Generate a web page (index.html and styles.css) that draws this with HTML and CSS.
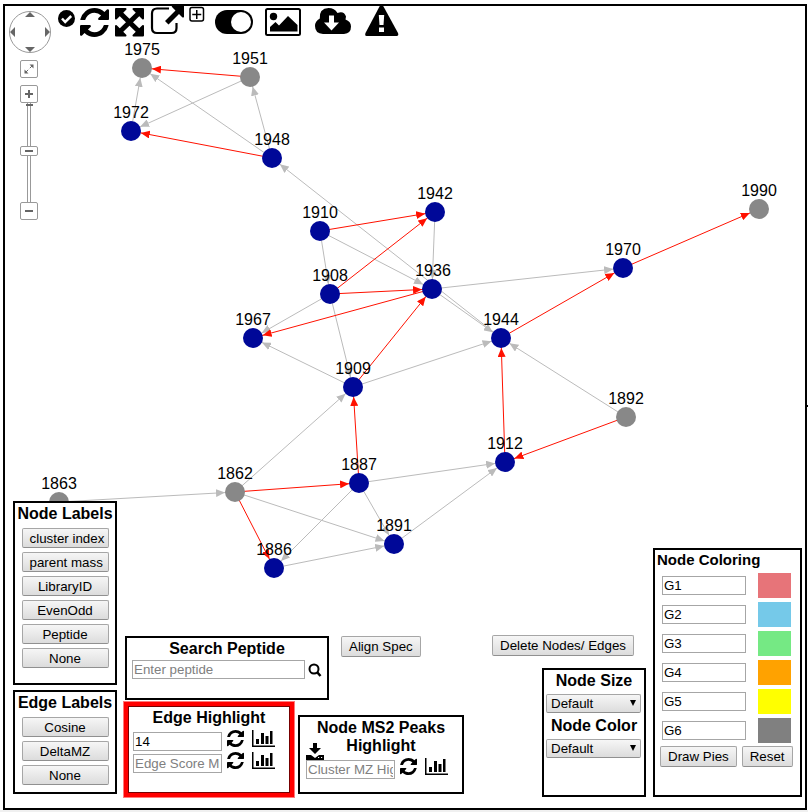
FILE: index.html
```html
<!DOCTYPE html>
<html lang="en">
<head>
<meta charset="utf-8">
<title>Network Viewer</title>
<link rel="stylesheet" href="styles.css">
</head>
<body>
<svg class="defs" aria-hidden="true">
  <symbol id="refresh" viewBox="0 0 1536 1536"><path d="M1511 928q0 5-1 7-64 268-268 434.500t-478 166.500q-146 0-282.500-55t-243.500-157l-129 129q-19 19-45 19t-45-19-19-45v-448q0-26 19-45t45-19h448q26 0 45 19t19 45-19 45l-137 137q71 66 161 102t187 36q134 0 250-65t186-179q11-17 53-117 8-23 30-23h192q13 0 22.500 9.500t9.500 22.500zM1536 128v448q0 26-19 45t-45 19h-448q-26 0-45-19t-19-45 19-45l138-138q-148-137-349-137-134 0-250 65t-186 179q-11 17-53 117-8 23-30 23h-199q-13 0-22.500-9.500t-9.500-22.500v-7q65-268 270-434.500t480-166.500q146 0 284 55.500t245 156.500l130-129q19-19 45-19t45 19 19 45z"/></symbol>
  <symbol id="chart" viewBox="0 0 23 17"><path d="M0 0h1.500v15.500H23V17H0zM4 9h3v5H4zM9 3h3v11H9zM13.500 6h3v8h-3zM18 1h2.500v13H18z"/></symbol>
</svg>
<div class="page">
  <svg class="graph" role="img" aria-label="Spectral network">
    <defs>
      <marker id="tip-grey" markerUnits="userSpaceOnUse" markerWidth="9" markerHeight="8" refX="19" refY="4" orient="auto"><path d="M0 0L9 4L0 8z" fill="#bbb"/></marker>
      <marker id="tip-red" markerUnits="userSpaceOnUse" markerWidth="9" markerHeight="8" refX="19" refY="4" orient="auto"><path d="M0 0L9 4L0 8z" fill="#f10"/></marker>
    </defs>
    <g class="edges">
      <path d="M131 131L142 68"/><path d="M272 158L142 68"/><path d="M250 77L131 131"/><path d="M272 158L250 77"/>
      <path d="M501 338L272 158"/><path d="M320 231L432 289"/><path d="M320 231L330 294"/><path d="M435 212L432 289"/>
      <path d="M330 294L253 338"/><path d="M330 294L353 387"/><path d="M353 387L253 338"/><path d="M353 387L501 338"/>
      <path d="M432 289L623 268"/><path d="M432 289L501 338"/><path d="M626 417L501 338"/><path d="M235 492L353 387"/>
      <path d="M359 483L505 462"/><path d="M235 492L394 544"/><path d="M359 483L394 544"/><path d="M359 483L274 568"/>
      <path d="M274 568L394 544"/><path d="M394 544L505 462"/><path d="M59 502L235 492"/>
    </g>
    <g class="edges matched">
      <path d="M250 77L142 68"/><path d="M272 158L131 131"/><path d="M320 231L435 212"/><path d="M330 294L435 212"/>
      <path d="M330 294L432 289"/><path d="M432 289L253 338"/><path d="M353 387L432 289"/><path d="M501 338L623 268"/>
      <path d="M623 268L759 209"/><path d="M505 462L501 338"/><path d="M626 417L505 462"/><path d="M235 492L359 483"/>
      <path d="M359 483L353 387"/><path d="M235 492L274 568"/>
    </g>
    <g class="nodes">
      <circle cx="131" cy="131" r="10"/><circle cx="272" cy="158" r="10"/><circle cx="435" cy="212" r="10"/>
      <circle cx="320" cy="231" r="10"/><circle cx="330" cy="294" r="10"/><circle cx="432" cy="289" r="10"/>
      <circle cx="253" cy="338" r="10"/><circle cx="501" cy="338" r="10"/><circle cx="353" cy="387" r="10"/>
      <circle cx="623" cy="268" r="10"/><circle cx="505" cy="462" r="10"/><circle cx="359" cy="483" r="10"/>
      <circle cx="394" cy="544" r="10"/><circle cx="274" cy="568" r="10"/>
    </g>
    <g class="nodes unmatched">
      <circle cx="142" cy="68" r="10"/><circle cx="250" cy="77" r="10"/><circle cx="759" cy="209" r="10"/>
      <circle cx="626" cy="417" r="10"/><circle cx="235" cy="492" r="10"/><circle cx="59" cy="502" r="10"/>
    </g>
    <g class="node-names">
      <text x="142" y="55">1975</text><text x="250" y="64">1951</text><text x="131" y="118">1972</text><text x="272" y="145">1948</text>
      <text x="435" y="199">1942</text><text x="320" y="218">1910</text><text x="330" y="281">1908</text><text x="433" y="276">1936</text>
      <text x="253" y="325">1967</text><text x="501" y="325">1944</text><text x="353" y="374">1909</text><text x="623" y="255">1970</text>
      <text x="759" y="196">1990</text><text x="626" y="404">1892</text><text x="505" y="449">1912</text><text x="359" y="470">1887</text>
      <text x="235" y="479">1862</text><text x="59" y="489">1863</text><text x="394" y="531">1891</text><text x="274" y="555">1886</text>
    </g>
  </svg>

  <main class="workspace">
    <header class="top">
      <div class="navigator">
        <button class="pan" type="button" aria-label="Pan"><svg width="42" height="42" viewBox="0 0 42 42"><circle cx="21" cy="21" r="20.500" fill="#fff" stroke="#999"/><path d="M21 1l5 5H16zM21 41l5-5H16zM1 21l5-5v10zM41 21l-5-5v10z" fill="#666"/></svg></button>
        <button class="nav-btn fit" type="button" aria-label="Fit"><svg width="16" height="16" viewBox="0 0 16 16"><path d="M4 12L12 4" stroke="#666" stroke-dasharray="4.500 2.300"/><path d="M8.500 3.500h4v4zM3.500 8.500v4h4z" fill="#666"/></svg></button>
        <button class="nav-btn" type="button" aria-label="Zoom in"><svg width="16" height="16" viewBox="0 0 16 16"><path d="M8 4v8M4 8h8" stroke="#666" stroke-width="2"/></svg></button>
        <input class="zoom" type="range" min="0" max="100" value="52" aria-label="Zoom">
        <button class="nav-btn" type="button" aria-label="Zoom out"><svg width="16" height="16" viewBox="0 0 16 16"><path d="M4 8h8" stroke="#666" stroke-width="2"/></svg></button>
      </div>
      <div class="tools">
        <button type="button" aria-label="Select"><svg width="17" height="32" viewBox="0 0 17 32"><circle cx="8.500" cy="12.500" r="8.500"/><path d="M4 12.500l3.200 3.500 6-6" fill="none" stroke="#fff" stroke-width="2.500"/></svg></button>
        <button type="button" aria-label="Refresh"><svg width="30" height="32"><use href="#refresh" x="0" y="2" width="29" height="29"/></svg></button>
        <button type="button" aria-label="Expand"><svg width="30" height="32" viewBox="0 -2 30 32"><path d="M5 5l19 18.500M24 5L5 23.500" stroke="#000" stroke-width="5"/><path d="M1 1h9.500L1 10.500zM28 1v9.500L18.500 1zM1 27.500V18l9.500 9.500zM28 27.500h-9.500L28 18z" stroke="#000" stroke-width="2" stroke-linejoin="round"/></svg></button>
        <button type="button" aria-label="Open in new window"><svg width="34" height="32" viewBox="0 0 34 32"><path d="M19 2.500H7Q2 2.500 2 7.500V22q0 5 5 5h14.500q5 0 5-5V17" fill="none" stroke="#000" stroke-width="2.200"/><path d="M22 0h12v11q-1 1-2 0l-3-3-10.500 10.500-3.500-3.500L25.500 4.500 22 1q-.6-.6 0-1z"/></svg></button>
        <button type="button" aria-label="Add"><svg width="16" height="32" viewBox="0 0 16 32"><path d="M3 1.500h9.500q2 0 2 2V13q0 2-2 2H3q-2 0-2-2V3.500q0-2 2-2zM7.750 4v9M3.250 8.500h9" fill="none" stroke="#000" stroke-width="1.500"/></svg></button>
        <div class="tools-view">
          <button type="button" aria-label="Toggle"><svg width="37" height="32" viewBox="0 0 37 32"><rect x="0" y="4" width="38" height="24" rx="12"/><circle cx="26" cy="16" r="10" fill="#fff"/></svg></button>
          <button type="button" aria-label="Save image"><svg width="37" height="32" viewBox="0 0 37 32"><rect x="1" y="3" width="34" height="26" rx="1.500" fill="none" stroke="#000" stroke-width="2"/><circle cx="8.500" cy="10.500" r="3.700"/><path d="M5 25.500v-4.500l5.500-5 3.500 3.500 9-9.500 9.500 9v6.500z"/></svg></button>
          <button type="button" aria-label="Download"><svg width="37" height="32" viewBox="0 0 37 32"><path d="M8 28Q0 27.500 0 20q0-5 4.800-7.500Q4 2.500 13.500 2q6 0 9 5 6.500-2.500 8.500 3.500l-.5 3q5.500 2 5.500 7 0 7-7 7.500z"/><path d="M14 9.500h5v7h5l-7.500 8-7.500-8h5z" fill="#fff"/></svg></button>
          <button type="button" aria-label="Report a problem"><svg width="34" height="32" viewBox="0 0 34 32"><path d="M14.500.5q2-2 4 0L33 27q1 3-1.500 3h-30Q-.5 30 .5 27z"/><path d="M13.800 9h5.400l-.7 10h-4zM14 21.500h5V26h-5z" fill="#fff"/></svg></button>
        </div>
      </div>
    </header>

    <div class="panels">
      <div class="labels-column">
        <section class="panel node-labels">
          <h2>Node Labels</h2>
          <button class="btn" type="button">cluster index</button>
          <button class="btn" type="button">parent mass</button>
          <button class="btn" type="button">LibraryID</button>
          <button class="btn" type="button">EvenOdd</button>
          <button class="btn" type="button">Peptide</button>
          <button class="btn" type="button">None</button>
        </section>
        <section class="panel edge-labels">
          <h2>Edge Labels</h2>
          <button class="btn" type="button">Cosine</button>
          <button class="btn" type="button">DeltaMZ</button>
          <button class="btn" type="button">None</button>
        </section>
      </div>

      <div class="search-column">
        <div class="search-row">
          <section class="panel search">
            <h2><label for="peptide">Search Peptide</label></h2>
            <div class="field">
              <input id="peptide" type="text" placeholder="Enter peptide">
              <button class="icon" type="button" aria-label="Search"><svg width="14" height="14" viewBox="0 0 14 14"><circle cx="6" cy="6" r="4.500" fill="none" stroke="#000" stroke-width="2"/><path d="M9 9l3.500 4" stroke="#000" stroke-width="2.500"/></svg></button>
            </div>
          </section>
          <button class="btn wide" type="button">Align Spec</button>
        </div>
        <div class="highlight-row">
          <section class="panel edge-highlight">
            <h2>Edge Highlight</h2>
            <div class="field">
              <input type="text" value="14" aria-label="Edge mass">
              <button class="icon" type="button" aria-label="Apply"><svg width="17" height="17"><use href="#refresh"/></svg></button>
              <button class="icon chart" type="button" aria-label="Histogram"><svg width="23" height="17"><use href="#chart"/></svg></button>
            </div>
            <div class="field">
              <input type="text" placeholder="Edge Score Min" aria-label="Edge score">
              <button class="icon" type="button" aria-label="Apply"><svg width="17" height="17"><use href="#refresh"/></svg></button>
              <button class="icon chart" type="button" aria-label="Histogram"><svg width="23" height="17"><use href="#chart"/></svg></button>
            </div>
          </section>
          <section class="panel peaks">
            <h2>Node MS2 Peaks Highlight</h2>
            <div class="field">
              <button class="icon save" type="button" aria-label="Download"><svg width="18" height="17" viewBox="0 0 18 17"><path d="M7 0h4v5h4l-6 6-6-6h4zM0 12h5l4 3 4-3h5v5H0z"/><path d="M12 14.500h1.200M15 14.500h1.200" stroke="#fff"/></svg></button>
              <input type="text" placeholder="Cluster MZ Highlight" aria-label="Cluster MZ">
              <button class="icon" type="button" aria-label="Apply"><svg width="17" height="17"><use href="#refresh"/></svg></button>
              <button class="icon chart" type="button" aria-label="Histogram"><svg width="23" height="17"><use href="#chart"/></svg></button>
            </div>
          </section>
        </div>
      </div>

      <div class="size-column">
        <button class="btn wide" type="button">Delete Nodes/ Edges</button>
        <section class="panel node-style">
          <h2><label for="node-size">Node Size</label></h2>
          <div class="select"><select id="node-size"><option>Default</option></select></div>
          <h2><label for="node-color">Node Color</label></h2>
          <div class="select"><select id="node-color"><option>Default</option></select></div>
        </section>
      </div>

      <section class="panel coloring">
        <h2>Node Coloring</h2>
        <div class="group"><input type="text" value="G1" aria-label="Group 1"><input type="color" value="#e77479" aria-label="Group 1 color"></div>
        <div class="group"><input type="text" value="G2" aria-label="Group 2"><input type="color" value="#75c9e9" aria-label="Group 2 color"></div>
        <div class="group"><input type="text" value="G3" aria-label="Group 3"><input type="color" value="#75e984" aria-label="Group 3 color"></div>
        <div class="group"><input type="text" value="G4" aria-label="Group 4"><input type="color" value="#ffa200" aria-label="Group 4 color"></div>
        <div class="group"><input type="text" value="G5" aria-label="Group 5"><input type="color" value="#ffff00" aria-label="Group 5 color"></div>
        <div class="group"><input type="text" value="G6" aria-label="Group 6"><input type="color" value="#808080" aria-label="Group 6 color"></div>
        <div class="actions"><button class="btn wide" type="button">Draw Pies</button><button class="btn wide" type="button">Reset</button></div>
      </section>
    </div>
  </main>
</div>
</body>
</html>
```
FILE: styles.css
```css
* { box-sizing: border-box; }

body {
  margin: 0;
  background: #fff;
  color: #000;
  font-family: "Liberation Sans", Arial, sans-serif;
}

button, input, select { margin: 0; font-family: inherit; color: inherit; }
button { padding: 0; border: 0; background: none; }
svg { display: block; overflow: visible; }
.defs { position: absolute; width: 0; height: 0; }

.page {
  position: relative;
  display: flex;
  min-height: 100vh;
  padding: 4px 1px 0 3px;
  border-bottom: 2px solid #f0f0f0;
}
.page::after {
  content: "";
  position: absolute;
  top: 50%;
  right: 0;
  width: 2px;
  height: 2px;
  background: #000;
}

/* Network drawing */
.graph { position: absolute; inset: 0; width: 100%; height: 100%; overflow: hidden; }
.edges { fill: none; stroke: #bbb; }
.edges path { marker-end: url(#tip-grey); }
.edges.matched { stroke: #f10; }
.edges.matched path { marker-end: url(#tip-red); }
.nodes { fill: #000898; }
.nodes.unmatched { fill: #888; }
.node-names { font-size: 16px; text-anchor: middle; }

.workspace {
  position: relative;
  flex: 1;
  display: flex;
  flex-direction: column;
  justify-content: space-between;
  border: 2px solid #000;
}

/* Navigator and toolbar */
.top { display: flex; gap: 7px; padding-left: 4px; }
.navigator { display: flex; flex-direction: column; align-items: flex-start; padding-top: 5px; }
.nav-btn { width: 18px; height: 18px; margin-left: 11px; border: 1px solid #999; border-radius: 2px; background: #fff; }
.fit { margin-top: 7px; margin-bottom: 7px; }
.zoom {
  appearance: none;
  writing-mode: vertical-lr;
  direction: rtl;
  width: 18px;
  height: 99px;
  margin: 0 0 0 11px;
  background:
    linear-gradient(#666, #666) 50% 1px / 7px 2px no-repeat,
    linear-gradient(90deg, #999 1px, #fff 1px 3px, #999 3px) 50% 0 / 4px 100% no-repeat;
}
.zoom::-webkit-slider-thumb {
  appearance: none;
  width: 18px;
  height: 10px;
  border: 1px solid #999;
  border-radius: 2px;
  background: linear-gradient(#666, #666) 50% 50% / 8px 2px no-repeat #fff;
}
.tools, .tools-view { display: flex; align-items: flex-start; }
.tools { gap: 5px; }
.tools-view { gap: 13px; margin-left: 5px; }

/* Panels */
.panels { display: flex; align-items: flex-end; gap: 7px; padding: 0 3px 11px 8px; }
.panel { padding: 1px 5px; border: 2px solid #000; background: #fff; }
.panel h2 {
  margin: 0;
  padding-top: 1px;
  font-size: 16px;
  line-height: 18px;
  text-align: center;
  white-space: nowrap;
}

.btn {
  height: 20px;
  padding: 0 7px;
  border: 1px solid #a6a6a6;
  border-bottom-color: #909090;
  border-radius: 2px;
  background: linear-gradient(#f6f6f6, #dcdcdc);
  white-space: nowrap;
}
.btn.wide { height: 21px; }

input[type="text"] {
  width: 89px;
  height: 19px;
  padding: 1px;
  border: 1px solid #a6a6a6;
  background: #fff;
}
input::placeholder { color: #808080; }

.labels-column { display: flex; flex-direction: column; gap: 5px; margin-bottom: 3px; }
.labels-column .panel { display: flex; flex-direction: column; align-items: center; gap: 4px; width: 104px; }
.labels-column h2 { margin-bottom: 1px; }
.labels-column .btn { width: 87px; }
.node-labels { padding-bottom: 15px; }
.edge-labels { padding-bottom: 7px; }

.search-column { display: flex; flex-direction: column; gap: 2px; }
.search-row { display: flex; align-items: flex-start; gap: 12px; padding-left: 1px; }
.field { position: relative; display: flex; align-items: flex-start; height: 19px; }
.icon { margin: -2px 0 0 5px; }
.icon.chart { margin-left: 8px; }

.search { width: 204px; height: 64px; }
.search .field { align-items: center; margin-top: 2px; }
.search input { width: 173px; }
.search .icon { margin: 0 0 0 3px; }

.highlight-row { display: flex; align-items: flex-end; gap: 4px; }
.edge-highlight {
  width: 170px;
  padding: 2px 5px 20px;
  border: 4px solid #f00;
  box-shadow: 0 0 0 1px #ff7a7a, inset 0 0 0 1px #700;
}
.edge-highlight h2 { margin-bottom: 5px; }
.edge-highlight .field + .field { margin-top: 3px; }
.peaks { width: 166px; margin-bottom: 3px; padding: 1px 6px 13px; }
.panel.peaks h2 { white-space: normal; }
.peaks .field { margin-top: 5px; }
.icon.save { position: absolute; left: 0; bottom: 100%; margin: 0; }

.size-column { display: flex; flex-direction: column; gap: 12px; width: 154px; margin-left: auto; }
.size-column .btn { align-self: flex-start; }
.node-style { align-self: flex-end; width: 104px; padding: 1px 2px 34px; }
.select { position: relative; margin: 4px 0 3px; }
.select::after {
  content: "";
  position: absolute;
  top: 6px;
  right: 6px;
  border: solid transparent;
  border-width: 6px 3px 0;
  border-top-color: #000;
  pointer-events: none;
}
select {
  appearance: none;
  display: block;
  width: 95px;
  height: 19px;
  padding: 0 4px;
  border: 1px solid #a6a6a6;
  border-bottom-color: #909090;
  border-radius: 2px;
  background: linear-gradient(#f6f6f6, #dcdcdc);
}

.coloring { width: 149px; padding: 0 2px 28px; }
.panel.coloring h2 { margin-bottom: 4px; font-size: 15px; text-align: left; }
.group { display: flex; align-items: center; gap: 12px; padding-left: 5px; }
.group + .group { margin-top: 4px; }
.group input[type="text"] { width: 84px; }
input[type="color"] { appearance: none; width: 33px; height: 25px; padding: 0; border: 0; background: none; }
input[type="color"]::-webkit-color-swatch-wrapper { padding: 0; }
input[type="color"]::-webkit-color-swatch { border: 0; border-radius: 0; }
.actions { display: flex; gap: 5px; margin-top: 3px; padding-left: 3px; }
```
